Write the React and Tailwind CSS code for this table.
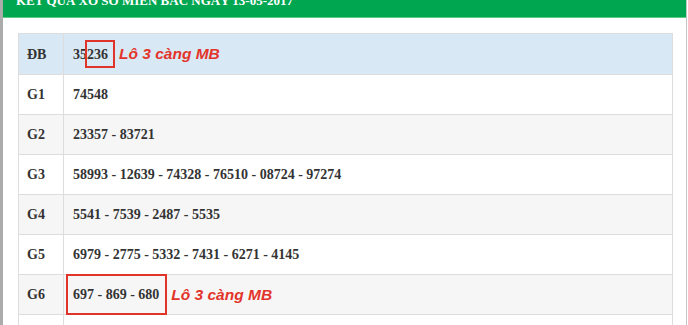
import React from "react";

const rows = [
  { k: "ĐB", v: "35236", bg: "bg-[#d9e8f5]" },
  { k: "G1", v: "74548", bg: "bg-white" },
  { k: "G2", v: "23357 - 83721", bg: "bg-[#f6f6f6]" },
  { k: "G3", v: "58993 - 12639 - 74328 - 76510 - 08724 - 97274", bg: "bg-white" },
  { k: "G4", v: "5541 - 7539 - 2487 - 5535", bg: "bg-[#f6f6f6]" },
  { k: "G5", v: "6979 - 2775 - 5332 - 7431 - 6271 - 4145", bg: "bg-white" },
  { k: "G6", v: "697 - 869 - 680", bg: "bg-[#f6f6f6]" },
  { k: "", v: "", bg: "bg-white" },
];

const serif = { fontFamily: '"Liberation Serif", "Times New Roman", serif' };

function Tag() {
  return (
    <span
      className="text-[15.5px] font-bold italic text-[#e3342b]"
      style={{ fontFamily: '"Liberation Sans", Arial, sans-serif' }}
    >
      Lô 3 càng MB
    </span>
  );
}

export default function App() {
  return (
    <div className="w-[688px] h-[325px] overflow-hidden bg-white pr-[1px]">
      <div className="h-full flex flex-col border-l-[3px] border-l-[#ababab] border-r border-r-[#c4c4c4]">
        <div className="h-[18px] shrink-0 bg-[#00a650] border-b border-b-[#5cc985] overflow-hidden pl-[13px]">
          <div
            className="text-white font-bold text-[13px] leading-[13px] -mt-[6px] whitespace-nowrap"
            style={serif}
          >
            KẾT QUẢ XỔ SỐ MIỀN BẮC NGÀY 13-05-2017
          </div>
        </div>
        <div className="pt-[15px] pl-[15px] pr-[13px]">
          <div className="border border-[#dddddd] border-b-0 text-[#333333]" style={serif}>
            {rows.map((r, i) => (
              <div
                key={i}
                className={`flex h-[40px] ${r.bg} ${i > 0 ? "border-t border-t-[#dddddd]" : ""} box-border`}
              >
                <div className="w-[45px] shrink-0 border-r border-r-[#dddddd] flex items-center pl-[8px] text-[14px] font-bold">
                  {r.k}
                </div>
                <div className="relative flex-1 flex items-center pl-[9px] text-[14px] font-bold whitespace-nowrap">
                  <span>{r.v}</span>
                  {i === 0 && (
                    <>
                      <span className="ml-[11px]"><Tag /></span>
                      <div className="absolute left-[21px] top-[6px] w-[30px] h-[28px] border-2 border-[#e0332a]" />
                    </>
                  )}
                  {i === 6 && (
                    <>
                      <span className="ml-[12px]"><Tag /></span>
                      <div className="absolute left-[2px] -top-[1px] w-[101px] h-[41px] border-2 border-[#e0332a]" />
                    </>
                  )}
                </div>
              </div>
            ))}
          </div>
        </div>
      </div>
    </div>
  );
}
